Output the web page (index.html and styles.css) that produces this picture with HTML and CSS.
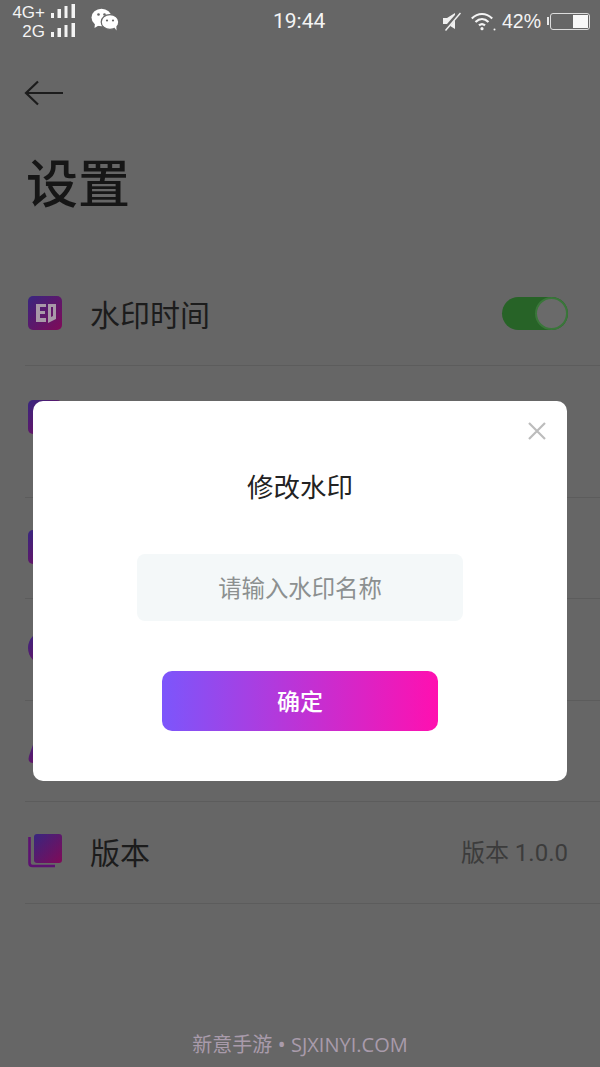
FILE: index.html
```html
<!DOCTYPE html>
<html lang="zh-CN">
<head>
<meta charset="utf-8">
<title>设置</title>
<link rel="stylesheet" href="styles.css">
</head>
<body>
<div class="page">
  <svg width="0" height="0" class="defs">
    <defs>
      <linearGradient id="ig" x1="0" y1="0" x2="1" y2="1">
        <stop offset="0" stop-color="#38267f"/>
        <stop offset="1" stop-color="#800a58"/>
      </linearGradient>
    </defs>
  </svg>
  <header class="status">
    <div class="net">
      <div class="net-row"><span class="net-label">4G+</span>
        <svg class="bars" width="24" height="14" viewBox="0 0 24 14"><rect x="0" y="9" width="3" height="5"/><rect x="6.500" y="5" width="3.500" height="9"/><rect x="13.500" y="2" width="3" height="12"/><rect x="20.500" y="0" width="3.500" height="14"/></svg>
      </div>
      <div class="net-row"><span class="net-label">2G</span>
        <svg class="bars" width="24" height="14" viewBox="0 0 24 14"><rect x="0" y="9" width="3" height="5"/><rect x="6.500" y="5" width="3.500" height="9"/><rect x="13.500" y="2" width="3" height="12"/><rect x="20.500" y="0" width="3.500" height="14"/></svg>
      </div>
    </div>
    <svg class="wechat" width="28" height="23" viewBox="0 0 28 23">
      <ellipse cx="10.500" cy="9.500" rx="10" ry="8.700" fill="#fff"/>
      <path d="M4 15l-.5 5 5-3z" fill="#fff"/>
      <ellipse cx="19" cy="14" rx="8.800" ry="7.400" fill="#fff" stroke="#666" stroke-width="1.200"/>
      <path d="M23 19l2.500 3.500-.2-5z" fill="#fff"/>
      <circle cx="7.500" cy="6.500" r="1.300" fill="#666"/><circle cx="13.500" cy="6.500" r="1.300" fill="#666"/>
      <circle cx="16" cy="12.500" r="1.100" fill="#666"/><circle cx="22" cy="12.500" r="1.100" fill="#666"/>
    </svg>
    <div class="time">19:44</div>
    <div class="status-right">
      <svg class="mute" width="18" height="19" viewBox="0 0 18 19">
        <path d="M0 6h4l8-5v16l-8-5H0z" fill="#f0f0f0"/>
        <path d="M1 18L16.500 .5" stroke="#666" stroke-width="3.500"/>
        <path d="M2.500 18.500L17.500 1" stroke="#f0f0f0" stroke-width="1.500"/>
      </svg>
      <svg class="wifi" width="25" height="19" viewBox="0 0 25 19" fill="none" stroke="#f4f4f4" stroke-width="2.200">
        <path d="M.8 6.500C7 .5 15 .5 21.200 6.500"/>
        <path d="M4.500 10c4-3.800 9-3.800 13 0"/>
        <path d="M8 13.400c2-1.800 4-1.800 6 0"/>
        <circle cx="11" cy="16.700" r="1.600" fill="#f4f4f4" stroke="none"/>
        <circle cx="23.500" cy="17.500" r="1" fill="#f4f4f4" stroke="none"/>
      </svg>
      <span class="pct">42%</span>
      <div class="battery"><span class="battery-cap"></span><div class="battery-body"><span class="battery-fill"></span></div></div>
    </div>
  </header>

  <div class="topbar">
    <svg width="40" height="26" viewBox="0 0 40 26" fill="none" stroke="#1c1c1c" stroke-width="2.200">
      <path d="M39 13H2"/><path d="M14 1.500L2 13l12 11.500"/>
    </svg>
  </div>
  <h1 class="title">设置</h1>

  <ul class="list">
    <li class="row">
      <svg class="icon" width="34" height="34" viewBox="0 0 34 34">
        <rect width="34" height="34" rx="5" fill="url(#ig)"/>
        <path d="M8 8h10v3h-6v4h5v3h-5v4h6v4H8zM20 8h8v15l-8 4zM23 11v10l2-1v-9z" fill="#a898a8" fill-rule="evenodd"/>
      </svg>
      <span class="label">水印时间</span>
      <div class="toggle"><span class="knob"></span></div>
    </li>
    <li class="row row-tall">
      <svg class="icon" width="34" height="34" viewBox="0 0 34 34"><rect width="34" height="34" rx="5" fill="url(#ig)"/></svg>
    </li>
    <li class="row">
      <svg class="icon" width="34" height="34" viewBox="0 0 34 34"><rect width="34" height="34" rx="5" fill="url(#ig)"/></svg>
    </li>
    <li class="row">
      <svg class="icon" width="34" height="34" viewBox="0 0 34 34"><circle cx="17" cy="17" r="17" fill="url(#ig)"/></svg>
    </li>
    <li class="row">
      <svg class="icon" width="34" height="34" viewBox="0 0 34 34"><path d="M6 9L1 23Q-1 30 5 30H34V0H10z" fill="url(#ig)"/></svg>
    </li>
    <li class="row">
      <svg class="icon" width="34" height="34" viewBox="0 0 34 34">
        <path d="M1.500 3v26c0 2 1 3 3 3H27" fill="none" stroke="#5e1272" stroke-width="2.600"/>
        <rect x="6" y="0" width="28" height="29" rx="3" fill="url(#ig)"/>
      </svg>
      <span class="label">版本</span>
      <span class="value">版本 1.0.0</span>
    </li>
  </ul>

  <div class="dialog">
    <svg class="close" width="18" height="18" viewBox="0 0 18 18" stroke="#bcbcbc" stroke-width="2.200"><path d="M1 1l16 16M17 1L1 17"/></svg>
    <div class="dialog-title">修改水印</div>
    <div class="field">请输入水印名称</div>
    <div class="confirm">确定</div>
  </div>

  <div class="watermark">新意手游 <span class="dot">•</span> SJXINYI.COM</div>
</div>
</body>
</html>
```
FILE: styles.css
```css
* { box-sizing: border-box; }
html, body { margin: 0; padding: 0; }
body {
  width: 600px;
  height: 1067px;
  overflow: hidden;
  background: #666;
  font-family: "Noto Sans CJK SC", "Noto Sans", sans-serif;
}
.page { position: relative; width: 600px; height: 1067px; background: #666; }
.defs { position: absolute; }

.status {
  height: 42px;
  padding: 4px 10px 0 12px;
  display: flex;
  align-items: flex-start;
  color: #f4f4f4;
  position: relative;
}
.net { width: 63px; display: flex; flex-direction: column; align-items: flex-end; gap: 5px; }
.net-row { display: flex; align-items: flex-end; gap: 6px; height: 14px; }
.net-label { font: 17px/10px "Liberation Sans", sans-serif; }
.bars { fill: #f4f4f4; display: block; }
.wechat { margin: 4px 0 0 16px; }
.time {
  position: absolute;
  left: 273px;
  top: 8px;
  font: 21px/26px Roboto, sans-serif;
}
.status-right { margin-left: auto; display: flex; align-items: center; height: 34px; }
.mute { margin-right: 10px; }
.wifi { margin-right: 6px; }
.pct { font: 19.500px/24px "Liberation Sans", sans-serif; margin-right: 6px; }
.battery { display: flex; align-items: center; }
.battery-cap { width: 2px; height: 8px; background: #e8e8e8; margin-right: 1px; }
.battery-body {
  width: 40px;
  height: 17px;
  border: 1.500px solid #dcdcdc;
  border-radius: 3px;
  padding: 1px 1.500px;
  display: flex;
  justify-content: flex-end;
}
.battery-fill { width: 15px; background: #f8f8f8; }

.topbar { height: 61px; padding: 38px 0 0 24px; }
.topbar svg { display: block; }
.title {
  margin: 0;
  padding: 40px 0 0 26px;
  height: 161px;
  font-size: 52px;
  line-height: 76px;
  font-weight: 500;
  color: #161616;
}

.list { list-style: none; margin: 0; padding: 0 0 0 25px; }
.row {
  height: 101.500px;
  display: flex;
  align-items: center;
  padding: 0 32px 2px 3px;
  border-bottom: 1px solid #5c5c5c;
}
.row-tall { height: 132px; align-items: flex-start; padding-top: 34px; }
.icon { flex: none; display: block; overflow: visible; }
.label { margin-left: 28px; font-size: 30px; line-height: 44px; color: #1c1c1c; }
.value {
  margin-left: auto;
  padding-top: 3px;
  font-family: Roboto, "Noto Sans CJK SC", sans-serif;
  font-size: 24px;
  line-height: 34px;
  color: #3c3c3c;
}
.toggle {
  margin-left: auto;
  width: 66px;
  height: 33px;
  border-radius: 17px;
  background: #276327;
  display: flex;
  justify-content: flex-end;
}
.knob {
  width: 33px;
  height: 33px;
  border-radius: 50%;
  background: #6a6a6a;
  border: 2.500px solid #3a763a;
}

.dialog {
  position: absolute;
  left: 33px;
  top: 401px;
  width: 534px;
  height: 380px;
  background: #fff;
  border-radius: 10px;
  display: flex;
  flex-direction: column;
  align-items: center;
  padding-top: 65px;
}
.close { position: absolute; right: 21px; top: 21px; }
.dialog-title { font-size: 26.500px; line-height: 40px; color: #222; }
.field {
  margin-top: 48px;
  width: 326px;
  height: 67px;
  background: #f4f8f9;
  border-radius: 8px;
  display: flex;
  align-items: center;
  justify-content: center;
  padding-bottom: 2px;
  font-size: 23.400px;
  color: #8c9090;
}
.confirm {
  margin-top: 50px;
  width: 276px;
  height: 60px;
  border-radius: 10px;
  background: linear-gradient(90deg, #7c56fb 0%, #ff10b0 100%);
  display: flex;
  align-items: center;
  justify-content: center;
  padding-bottom: 2px;
  font-size: 23px;
  font-weight: 500;
  color: #fff;
}

.watermark {
  position: absolute;
  left: 0;
  right: 0;
  top: 1030px;
  text-align: center;
  font-family: "Open Sans", "Noto Sans CJK SC", sans-serif;
  font-size: 20px;
  line-height: 30px;
  color: #a99bab;
  white-space: nowrap;
}
.watermark .dot { font-size: 22px; line-height: 0; }
```
